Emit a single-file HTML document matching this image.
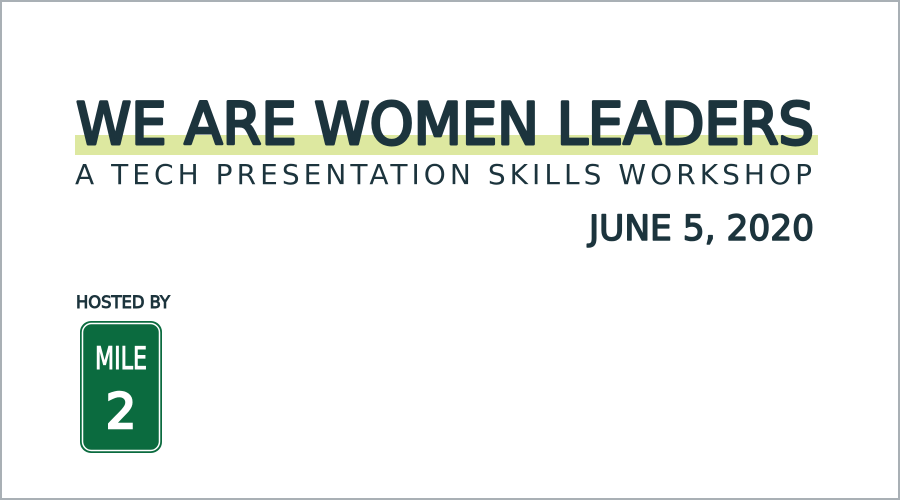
<!DOCTYPE html>
<html><head><style>
html,body{margin:0;padding:0;background:#fff;}
.f{width:896px;height:496px;border:2px solid #a9b0b5;position:relative;overflow:hidden;}
</style></head><body><div class="f">
<svg width="896" height="496" viewBox="2 2 896 496" style="position:absolute;left:0;top:0">
<rect x="75" y="135" width="743" height="20" fill="#dde8a0"/>
<g fill="#1c343d" font-family="'DejaVu Sans','Liberation Sans',sans-serif">
<text x="76" y="144" font-size="58" stroke="#1c343d" stroke-width="3" stroke-linejoin="round" textLength="738" lengthAdjust="spacingAndGlyphs">WE ARE WOMEN LEADERS</text>
<text x="75" y="184" font-size="28" textLength="737" lengthAdjust="spacing">A TECH PRESENTATION SKILLS WORKSHOP</text>
<text x="589" y="240" font-size="35" stroke="#1c343d" stroke-width="1.5" stroke-linejoin="round" textLength="225" lengthAdjust="spacingAndGlyphs">JUNE 5, 2020</text>
<text x="76" y="308" font-size="16.5" stroke="#1c343d" stroke-width="0.9" textLength="94" lengthAdjust="spacingAndGlyphs">HOSTED BY</text>
</g>
<rect x="80" y="321" width="82" height="132" rx="11" fill="#0b6b3f"/>
<rect x="82.5" y="323.5" width="77" height="127" rx="9" fill="none" stroke="#fff" stroke-width="1.5"/>
<g fill="#fff" stroke="#fff" font-family="'DejaVu Sans','Liberation Sans',sans-serif" text-anchor="middle">
<text x="121" y="369" font-size="31" stroke-width="1" textLength="52" lengthAdjust="spacingAndGlyphs">MILE</text>
<text x="121" y="428" font-size="48" stroke-width="2.5">2</text>
</g>
</svg>
</div></body></html>
